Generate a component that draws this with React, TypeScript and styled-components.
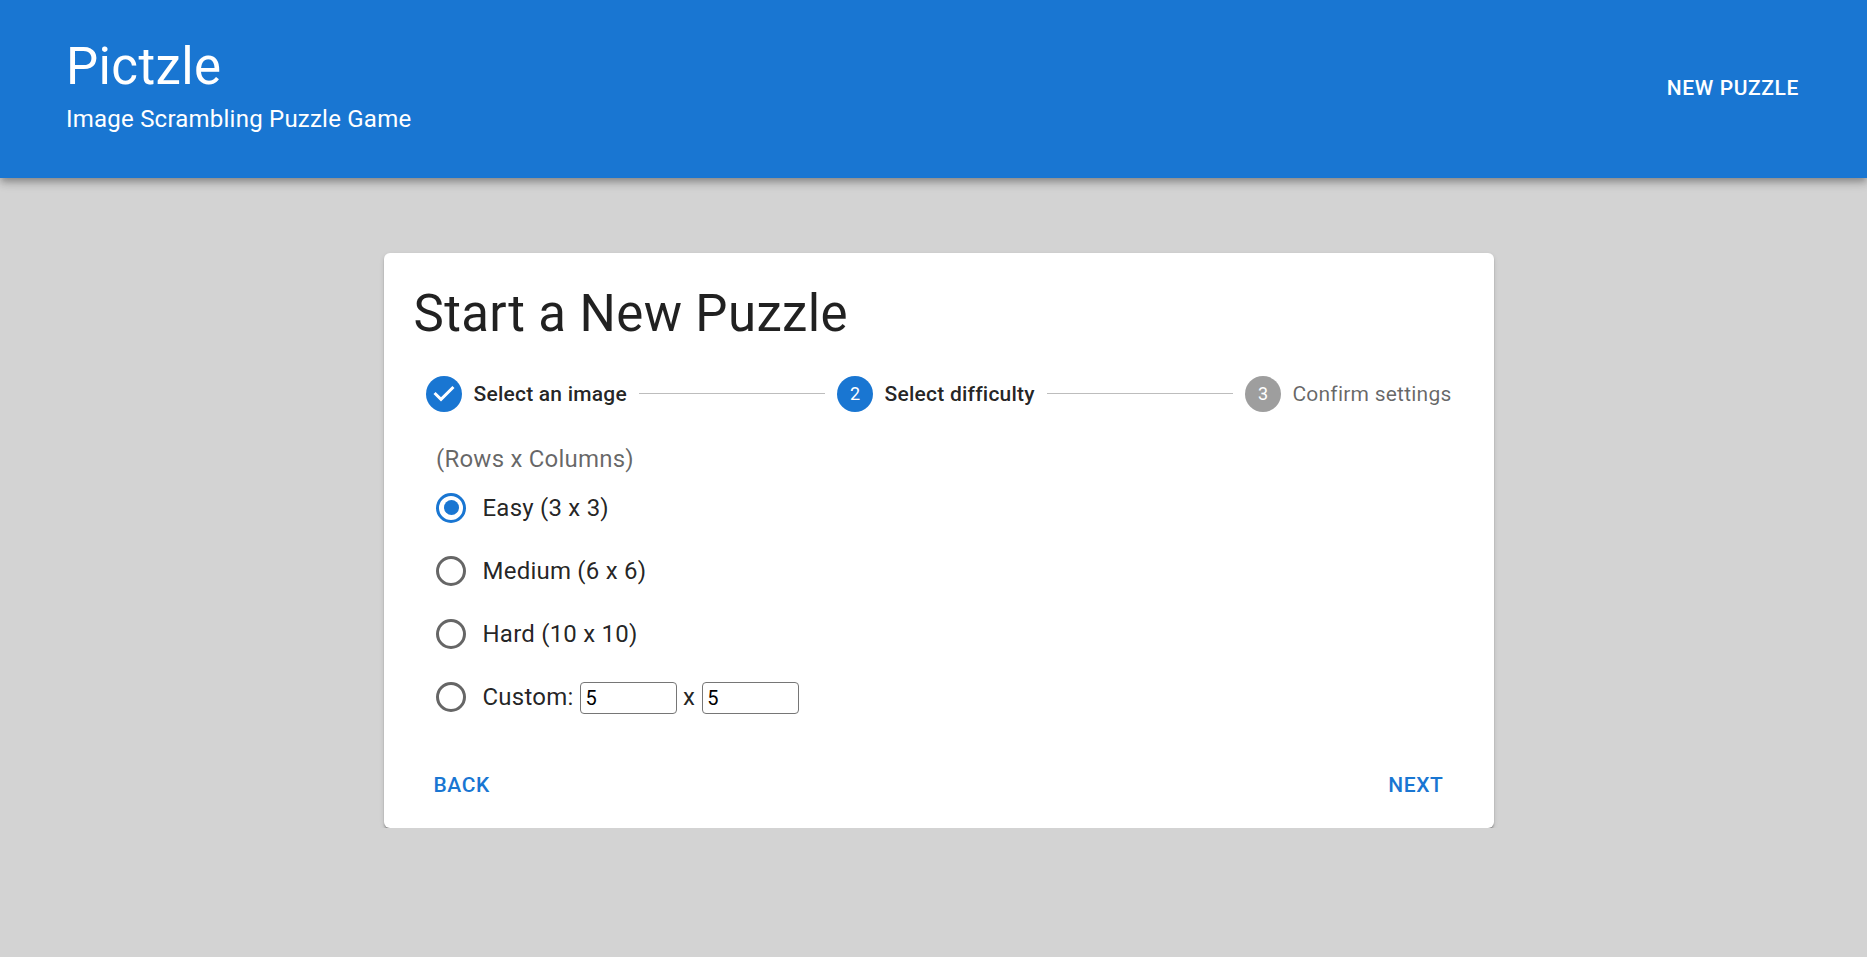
import React, { useState } from "react";
import styled, { createGlobalStyle } from "styled-components";

const BLUE = "#1976d2";

const GlobalStyle = createGlobalStyle`
  *, *::before, *::after { box-sizing: border-box; }
  html, body { margin: 0; min-height: 100%; background: #d3d3d3; }
  body {
    font-family: Roboto, "Liberation Sans", sans-serif;
    font-size: 24px;
    color: rgba(0, 0, 0, 0.87);
  }
`;

const Header = styled.header`
  display: flex;
  justify-content: space-between;
  height: 178px;
  padding: 35px 56px 0 66px;
  background: ${BLUE};
  color: #fff;
  box-shadow: 0 3px 6px -1.5px rgba(0, 0, 0, 0.2), 0 6px 7.5px rgba(0, 0, 0, 0.14),
    0 1.5px 15px rgba(0, 0, 0, 0.12);
`;

const Brand = styled.h1`
  margin: 0;
  font-size: 51px;
  font-weight: 400;
  line-height: 63px;
  letter-spacing: 0.00735em;
`;

const Tagline = styled.p`
  margin: 3px 0 0;
  font-size: 24px;
  line-height: 36px;
  letter-spacing: 0.00938em;
`;

const Button = styled.button<{ $inverse?: boolean }>`
  height: 55px;
  padding: 0 12px;
  border: 0;
  border-radius: 6px;
  background: transparent;
  color: ${(p) => (p.$inverse ? "#fff" : BLUE)};
  font: 500 21px/37px Roboto, "Liberation Sans", sans-serif;
  letter-spacing: 0.02857em;
  text-transform: uppercase;
  cursor: pointer;
`;

const HeaderActions = styled.nav`
  padding-top: 26px;
`;

const Card = styled.main`
  width: 1110px;
  height: 575px;
  margin: 75px 0 0 384px;
  padding: 29px 30px 0;
  border-radius: 6px;
  background: #fff;
  box-shadow: 0 3px 2px -1px rgba(0, 0, 0, 0.2), 0 2px 2px rgba(0, 0, 0, 0.14),
    0 2px 5px rgba(0, 0, 0, 0.12);
`;

const Title = styled.h2`
  margin: 0 0 0 -0.5px;
  font-size: 51px;
  font-weight: 400;
  line-height: 63px;
  letter-spacing: 0.00735em;
`;

const Stepper = styled.div`
  display: flex;
  align-items: center;
  height: 36px;
  margin-top: 31px;
  padding: 0 12px;
`;

const Step = styled.div<{ $active: boolean }>`
  display: flex;
  align-items: center;
  gap: 11.5px;
  padding-right: 0.5px;
  font-size: 21px;
  line-height: 30px;
  letter-spacing: 0.01071em;
  white-space: nowrap;
  font-weight: ${(p) => (p.$active ? 500 : 400)};
  color: ${(p) => (p.$active ? "rgba(0, 0, 0, 0.87)" : "rgba(0, 0, 0, 0.6)")};
`;

const StepBadge = styled.span<{ $active: boolean }>`
  display: flex;
  align-items: center;
  justify-content: center;
  width: 36px;
  height: 36px;
  border-radius: 50%;
  background: ${(p) => (p.$active ? BLUE : "#9e9e9e")};
  color: #fff;
  font-size: 18px;
  font-weight: 400;
  letter-spacing: 0;
`;

const Connector = styled.span`
  flex: 1;
  height: 1px;
  margin: 0 12px 1px;
  background: #bdbdbd;
`;

const Options = styled.fieldset`
  display: flex;
  flex-direction: column;
  margin: 30px 0 0 22px;
  padding: 0;
  border: 0;
  letter-spacing: 0.00938em;
`;

const Legend = styled.div`
  height: 34px;
  line-height: 34px;
  color: rgba(0, 0, 0, 0.6);
`;

const Option = styled.div`
  display: flex;
  align-items: center;
  height: 63px;
`;

const OptionLabel = styled.label`
  display: flex;
  align-items: center;
  gap: 16.5px;
  cursor: pointer;
`;

const Radio = styled.input`
  appearance: none;
  display: grid;
  place-items: center;
  width: 30px;
  height: 30px;
  margin: 0;
  border: 3px solid #666;
  border-radius: 50%;

  &:checked { border-color: ${BLUE}; }
  &:checked::before {
    content: "";
    width: 15px;
    height: 15px;
    border-radius: 50%;
    background: ${BLUE};
  }
`;

const SizeInput = styled.input`
  width: 97px;
  height: 32px;
  margin: 2px 6px 0 6.5px;
  padding: 0 4.5px;
  border: 1px solid #767676;
  border-radius: 4px;
  background: #fff;
  color: #000;
  font: 400 20px Roboto, "Liberation Sans", sans-serif;
`;

const CardActions = styled.div`
  display: flex;
  justify-content: space-between;
  margin-top: 30px;
  padding: 0 8.5px 0 7.5px;
`;

const steps = ["Select an image", "Select difficulty", "Confirm settings"];
const levels = ["Easy (3 x 3)", "Medium (6 x 6)", "Hard (10 x 10)", "Custom:"];
const CURRENT = 1;

const CheckMark = () => (
  <svg width="36" height="36" viewBox="0 0 24 24" fill="#fff">
    <path d="M10 17l-5-5 1.4-1.4 3.6 3.6 7.6-7.6L19 8l-9 9z" />
  </svg>
);

export default function App() {
  const [level, setLevel] = useState(0);
  const [rows, setRows] = useState("5");
  const [columns, setColumns] = useState("5");

  return (
    <>
      <GlobalStyle />
      <Header>
        <div>
          <Brand>Pictzle</Brand>
          <Tagline>Image Scrambling Puzzle Game</Tagline>
        </div>
        <HeaderActions>
          <Button $inverse>New Puzzle</Button>
        </HeaderActions>
      </Header>
      <Card>
        <Title>Start a New Puzzle</Title>
        <Stepper>
          {steps.map((label, i) => (
            <React.Fragment key={label}>
              {i > 0 && <Connector />}
              <Step $active={i <= CURRENT}>
                <StepBadge $active={i <= CURRENT}>{i < CURRENT ? <CheckMark /> : i + 1}</StepBadge>
                {label}
              </Step>
            </React.Fragment>
          ))}
        </Stepper>
        <Options>
          <Legend>(Rows x Columns)</Legend>
          {levels.map((label, i) => (
            <Option key={label}>
              <OptionLabel>
                <Radio type="radio" name="level" checked={level === i} onChange={() => setLevel(i)} />
                {label}
              </OptionLabel>
              {i === 3 && (
                <>
                  <SizeInput value={rows} onChange={(e) => setRows(e.target.value)} />
                  x
                  <SizeInput value={columns} onChange={(e) => setColumns(e.target.value)} />
                </>
              )}
            </Option>
          ))}
        </Options>
        <CardActions>
          <Button>Back</Button>
          <Button>Next</Button>
        </CardActions>
      </Card>
    </>
  );
}
